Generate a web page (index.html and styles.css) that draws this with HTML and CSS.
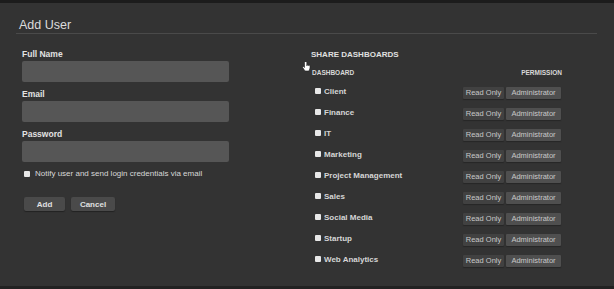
FILE: index.html
```html
<!DOCTYPE html>
<html lang="en">
<head>
  <meta charset="UTF-8" />
  <title>Add User</title>
  <link rel="stylesheet" href="styles.css">
</head>
<body>
  <div class="panel">
    <h2 class="title">Add User</h2>
    <div class="content">
      <div class="user-form">
        <div class="field">
          <label>Full Name</label>
          <input type="text" />
        </div>
        <div class="field">
          <label>Email</label>
          <input type="text" />
        </div>
        <div class="field">
          <label>Password</label>
          <input type="password" />
        </div>
        <div class="notify">
          <span class="box"></span>
          <span>Notify user and send login credentials via email</span>
        </div>
        <div class="actions">
          <button class="btn add">Add</button>
          <button class="btn cancel">Cancel</button>
        </div>
      </div>

      <div class="share">
        <h3>SHARE DASHBOARDS</h3>
        <div class="share-head">
          <svg class="cursor" width="9" height="11" viewBox="0 0 9 11">
            <path d="M2.5 0.5 v5 l-1-1 q-1 0-0.8 1 l2.3 3.5 h4 l1-3 v-2 q0-0.8-0.8-0.8 h-0.5 q-0.6 0-0.7 0.6 v-0.8 q-0.5-0.6-1.2 0 l0 0.7 v-3.2 q0-1-1.1-1 q-1 0-1.2 1z" fill="#fff" stroke="#222" stroke-width="0.6"/>
          </svg>
          <span>DASHBOARD</span>
          <span>PERMISSION</span>
        </div>
        <ul class="dash-list">
          <li><span class="name"><span class="box"></span>Client</span><span class="perm"><span class="ro">Read Only</span><span class="admin">Administrator</span></span></li>
          <li><span class="name"><span class="box"></span>Finance</span><span class="perm"><span class="ro">Read Only</span><span class="admin">Administrator</span></span></li>
          <li><span class="name"><span class="box"></span>IT</span><span class="perm"><span class="ro">Read Only</span><span class="admin">Administrator</span></span></li>
          <li><span class="name"><span class="box"></span>Marketing</span><span class="perm"><span class="ro">Read Only</span><span class="admin">Administrator</span></span></li>
          <li><span class="name"><span class="box"></span>Project Management</span><span class="perm"><span class="ro">Read Only</span><span class="admin">Administrator</span></span></li>
          <li><span class="name"><span class="box"></span>Sales</span><span class="perm"><span class="ro">Read Only</span><span class="admin">Administrator</span></span></li>
          <li><span class="name"><span class="box"></span>Social Media</span><span class="perm"><span class="ro">Read Only</span><span class="admin">Administrator</span></span></li>
          <li><span class="name"><span class="box"></span>Startup</span><span class="perm"><span class="ro">Read Only</span><span class="admin">Administrator</span></span></li>
          <li><span class="name"><span class="box"></span>Web Analytics</span><span class="perm"><span class="ro">Read Only</span><span class="admin">Administrator</span></span></li>
        </ul>
      </div>
    </div>
  </div>
</body>
</html>
```

FILE: styles.css
```css
html, body {
  margin: 0;
  height: 100%;
}
body {
  font-family: "Liberation Sans", Arial, sans-serif;
  background: #222;
  color: #ddd;
}
.panel {
  height: 286px;
  box-sizing: border-box;
  border-top: 3px solid #1c1c1c;
  background: #333;
  padding: 0 17px 0 16px;
}
.title {
  margin: 0;
  padding: 15px 0 1px 3px;
  font-size: 12.5px;
  font-weight: normal;
  line-height: 14px;
  color: #dcdcdc;
  border-bottom: 1px solid #4a4a4a;
}
.content {
  display: flex;
  padding-top: 14px;
}
.user-form {
  width: 207px;
  margin-left: 6px;
}
.field label {
  display: block;
  font-size: 8.5px;
  font-weight: bold;
  line-height: 12px;
  margin-bottom: 1px;
  color: #e2e2e2;
}
.field input {
  display: block;
  width: 100%;
  height: 21px;
  box-sizing: border-box;
  border: none;
  border-radius: 2px;
  background: #565656;
  margin-bottom: 6px;
}
.notify {
  display: flex;
  align-items: center;
  gap: 5px;
  margin: 6px 0 0 2px;
  font-size: 8px;
  line-height: 12px;
  color: #d8d8d8;
}
.box {
  display: inline-block;
  width: 6px;
  height: 6px;
  border-radius: 1px;
  background: #e8e8e8;
}
.actions {
  display: flex;
  gap: 6px;
  margin: 17px 0 0 2px;
}
.btn {
  height: 14px;
  padding: 0;
  border: none;
  border-radius: 2px;
  background: #4a4a4a;
  box-shadow: 0 1px 1px #222;
  color: #e0e0e0;
  font-family: "Liberation Sans", Arial, sans-serif;
  font-size: 8px;
  font-weight: bold;
}
.add { width: 41px; }
.cancel { width: 44px; }
.share {
  width: 251px;
  margin-left: 82px;
}
.share h3 {
  margin: 1px 0 0;
  font-size: 8px;
  line-height: 12px;
  color: #e0e0e0;
}
.share-head {
  position: relative;
  display: flex;
  justify-content: space-between;
  margin-top: 6px;
  padding-left: 1px;
  font-size: 6.5px;
  font-weight: bold;
  line-height: 12px;
  color: #d8d8d8;
}
.cursor {
  position: absolute;
  left: -9px;
  top: -5px;
}
.dash-list {
  list-style: none;
  margin: 3px 0 0;
  padding: 0;
}
.dash-list li {
  display: flex;
  justify-content: space-between;
  align-items: center;
  height: 21px;
}
.name {
  display: flex;
  align-items: center;
  gap: 3px;
  padding-left: 4px;
  margin-top: -3px;
  font-size: 8px;
  font-weight: bold;
  color: #d6d6d6;
}
.perm {
  display: flex;
  gap: 2px;
  margin-right: 1px;
}
.perm span {
  height: 12px;
  line-height: 12px;
  font-size: 7.5px;
  color: #c8c8c8;
  text-align: center;
  border-radius: 1px;
  box-shadow: 0 1px 1px #262626;
}
.ro {
  width: 41px;
  background: #414141;
}
.admin {
  width: 55px;
  background: #4f4f4f;
}
```
